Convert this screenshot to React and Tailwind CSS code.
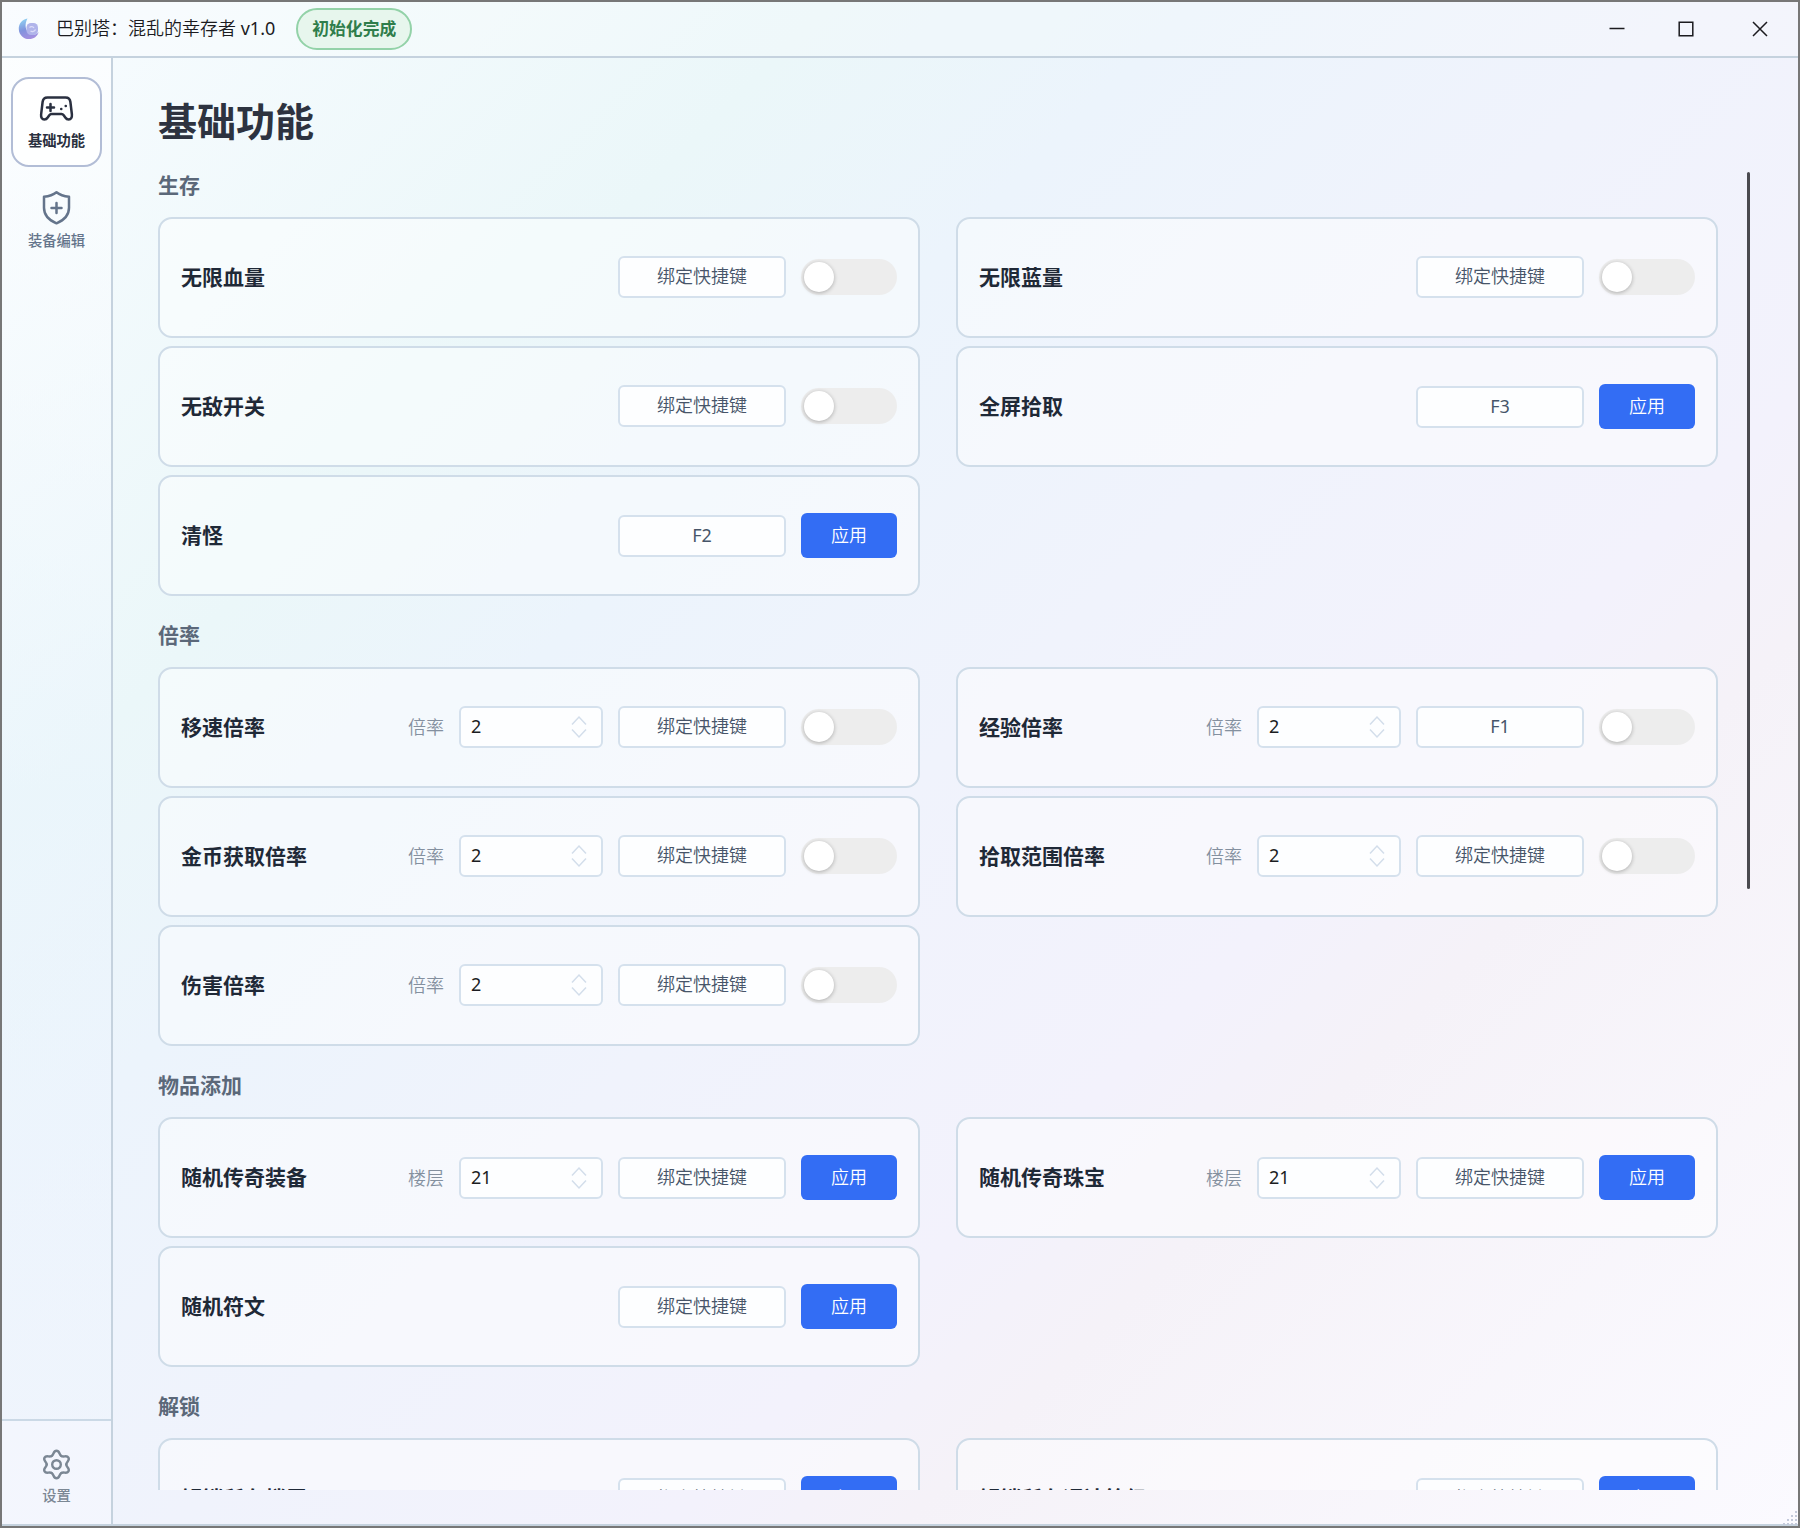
import React, { useState } from "react";

const sections = [
  {
    title: "生存",
    items: [
      { name: "无限血量", type: "switch" },
      { name: "无限蓝量", type: "switch" },
      { name: "无敌开关", type: "switch" },
      { name: "全屏拾取", hotkey: "F3", type: "apply" },
      { name: "清怪", hotkey: "F2", type: "apply" },
    ],
  },
  {
    title: "倍率",
    items: [
      { name: "移速倍率", label: "倍率", value: 2, type: "switch" },
      { name: "经验倍率", label: "倍率", value: 2, hotkey: "F1", type: "switch" },
      { name: "金币获取倍率", label: "倍率", value: 2, type: "switch" },
      { name: "拾取范围倍率", label: "倍率", value: 2, type: "switch" },
      { name: "伤害倍率", label: "倍率", value: 2, type: "switch" },
    ],
  },
  {
    title: "物品添加",
    items: [
      { name: "随机传奇装备", label: "楼层", value: 21, type: "apply" },
      { name: "随机传奇珠宝", label: "楼层", value: 21, type: "apply" },
      { name: "随机符文", type: "apply" },
    ],
  },
  {
    title: "解锁",
    items: [
      { name: "解锁所有楼层", type: "apply" },
      { name: "解锁所有通达等级", type: "apply" },
    ],
  },
];

const Logo = () => (
  <svg width="22" height="22" viewBox="0 0 22 22">
    <defs>
      <linearGradient id="moon" x1="0.3" y1="0" x2="0.6" y2="1">
        <stop offset="0" stopColor="#8fd0f2" />
        <stop offset="0.5" stopColor="#8194dd" />
        <stop offset="1" stopColor="#a78fe0" />
      </linearGradient>
    </defs>
    <path
      d="M9.500 0.600C4.300 1.400 0.600 5.800 0.800 11.200c0.200 5.600 4.800 10 10.400 9.900 4.600-0.100 8.300-3 9.500-7.200-2 2.600-5.600 3.400-8.600 1.900C7.300 13.400 6.200 6.200 9.500 0.600z"
      fill="url(#moon)"
    />
    <rect x="8.500" y="5" width="11.500" height="12" rx="4.500" fill="#b0b4ea" />
    <path d="M11.500 9.500a3 3 0 0 1 4.500 0.500M17.500 11.500a3.500 3.500 0 0 1-5 1.500" stroke="#dcdcf8" strokeWidth="1.300" fill="none" />
  </svg>
);

const GearIcon = () => (
  <svg width="37" height="37" viewBox="-18.500 -18.500 37 37" fill="none" stroke="currentColor" strokeWidth="2.400" strokeLinecap="round">
    {[0, 60, 120, 180, 240, 300].map((deg) => (
      <path
        key={deg}
        transform={`rotate(${deg})`}
        d="M-4.900-8.500C-2.300-10-3.400-13.800 0-13.800C3.400-13.800 2.300-10 4.900-8.500"
      />
    ))}
    <circle cx="0" cy="0" r="4.300" />
  </svg>
);

const Switch = () => {
  const [on, setOn] = useState(false);
  return (
    <button
      onClick={() => setOn(!on)}
      className={`flex h-9 w-24 items-center rounded-full px-[3px] ${on ? "justify-end bg-[#336df4]" : "bg-[#ededed]"}`}
    >
      <span className="h-[30px] w-[30px] rounded-full bg-white shadow-[0_1px_4px_rgba(0,0,0,0.28)]"></span>
    </button>
  );
};

const NumberBox = ({ value }) => (
  <div className="flex h-[42px] w-36 items-center justify-between rounded-md border-2 border-[#d5e1ed] bg-[#fdfeff] pr-[13px] pl-2.5">
    <span className="text-[18px] text-[#1b1d22]">{value}</span>
    <svg width="18" height="24" viewBox="0 0 18 24" fill="none" stroke="#d3deeb" strokeWidth="1.500">
      <path d="M2 9.500L9 2l7 7.500M2 14.500L9 22l7-7.500" />
    </svg>
  </div>
);

const Card = ({ item }) => (
  <div className="flex h-[121px] items-center rounded-[14px] border-2 border-[#cfdce8] bg-white/45 px-[21px]">
    <span className="flex-1 text-[21px] font-bold text-[#1f2937]">{item.name}</span>
    <div className={`flex items-center gap-[15px] ${item.type === "switch" ? "mb-0.5" : ""}`}>
      {item.label && (
        <>
          <span className="pt-0.5 text-[18px] font-[350] text-[#84909f]">{item.label}</span>
          <NumberBox value={item.value} />
        </>
      )}
      <div
        className={`flex h-[42px] w-[168px] items-center justify-center rounded-md border-2 border-[#d5e1ed] bg-[#fdfeff] text-[18px] text-[#475569] ${item.hotkey ? "font-normal" : "font-[350]"}`}
      >
        {item.hotkey || "绑定快捷键"}
      </div>
      {item.type === "switch" ? (
        <Switch />
      ) : (
        <button className="h-[45px] w-24 rounded-md bg-[#336df4] text-[18px] font-[350] text-white">应用</button>
      )}
    </div>
  </div>
);

const TitleBar = () => (
  <header className="flex h-14 shrink-0 items-center border-b-2 border-[#c5d2de] bg-white/20 pl-4">
    <Logo />
    <span className="ml-4 pb-0.5 text-[18px] font-[350] text-[#1b1b1f]">
      巴别塔：混乱的幸存者 <span className="font-normal">v1.0</span>
    </span>
    <span className="ml-[21px] flex h-[42px] w-[116px] items-center justify-center rounded-full border-2 border-[#93d2a8] bg-[#e7f6ed] text-[16.800px] font-bold text-[#2f7d4b]">
      初始化完成
    </span>
    <div className="ml-auto flex items-center pr-[30px] text-[#1b1b1f]">
      <svg width="16" height="16" viewBox="0 0 16 16" stroke="currentColor" strokeWidth="1.500">
        <path d="M0.500 7.500h15" />
      </svg>
      <svg className="ml-[53px]" width="16" height="16" viewBox="0 0 16 16" fill="none" stroke="currentColor" strokeWidth="1.500">
        <path d="M1.200 1.200h13.600v13.600H1.200z" />
      </svg>
      <svg className="ml-[58px]" width="16" height="16" viewBox="0 0 16 16" stroke="currentColor" strokeWidth="1.500">
        <path d="M1 1l14 14M15 1L1 15" />
      </svg>
    </div>
  </header>
);

const Sidebar = () => (
  <aside className="flex w-[111px] shrink-0 flex-col border-r-2 border-[#c5d2de] bg-linear-to-b from-white/60 via-[#eaf4fd]/50 to-[#f0f5fd]/60">
    <div className="flex flex-1 flex-col gap-[9px] px-[9px] pt-[19px]">
      <button className="flex h-[90px] flex-col items-center rounded-[18px] border-2 border-[#b2bdd6] bg-white/90 pt-[11px] text-[#2a3040]">
        <svg width="37" height="37" viewBox="-0.500 -0.500 37 37" fill="none" stroke="currentColor" strokeWidth="2.500" strokeLinecap="round" strokeLinejoin="round">
          <path d="M9 7h18c3 0 4.600 1.600 4.900 4.500l1.500 12.500c.3 3-1 5-3.200 5-1.500 0-2.500-.6-3.400-2l-1.600-2.300c-.6-.8-1.300-1.200-2.200-1.200h-10c-.9 0-1.600.4-2.200 1.200L9.200 27c-.9 1.400-1.900 2-3.400 2-2.200 0-3.500-2-3.200-5l1.500-12.500C4.400 8.600 6 7 9 7z" />
          <path d="M12 13.500v7M8.500 17h7" />
          <path d="M22.700 18.500h.1M27.200 15.500h.1" />
        </svg>
        <span className="mt-1 text-[14.300px] leading-5 font-bold">基础功能</span>
      </button>
      <button className="flex h-[90px] flex-col items-center pt-3.5 text-[#64748b]">
        <svg width="37" height="37" viewBox="-0.500 -0.500 37 37" fill="none" stroke="currentColor" strokeWidth="2.500" strokeLinecap="round" strokeLinejoin="round">
          <path d="M18 1.800c3.500 2.800 7.500 4 12.500 4.500v11c0 8-5 12.500-12.500 15.500C10.500 29.800 5.500 25.300 5.500 17.300V6.300c5-.5 9-1.700 12.500-4.500z" />
          <path d="M18 12.500v10M13 17.500h10" />
        </svg>
        <span className="mt-1 text-[14.300px] leading-5 font-medium">装备编辑</span>
      </button>
    </div>
    <div className="flex h-[105px] flex-col items-center border-t-2 border-[#cbd9e6] bg-[#f5f7fd]/70 pt-[25px] text-[#7b8794]">
      <GearIcon />
      <span className="mt-[3px] text-[14.300px] leading-5 font-medium">设置</span>
    </div>
  </aside>
);

const App = () => {
  return (
    <div className="relative flex h-[1528px] w-[1800px] flex-col overflow-hidden border-2 border-[#777777] bg-[linear-gradient(135deg,#f8fcff_0%,#ebf7f9_25%,#ecf4fc_36%,#f0f3fc_51%,#f3f2fc_66%,#f5f2f8_73%,#fbfaff_100%)] font-['Noto_Sans','Noto_Sans_CJK_SC',sans-serif]">
      <TitleBar />
      <div className="flex min-h-0 flex-1 border-b-2 border-[#c5d2de]">
        <Sidebar />
        <main className="flex min-w-0 flex-1 flex-col pr-12 pl-[45px]">
          <h1 className="mt-[35px] h-[79px] text-[39px] leading-[56px] font-bold text-[#2d3340]">基础功能</h1>
          <div className="flex h-[1318px] justify-between overflow-hidden">
            <div className="w-[1560px]">
              {sections.map((s) => (
                <section key={s.title} className="mb-[26px]">
                  <h2 className="h-[45px] text-[21px] leading-[26px] font-bold text-[#5b6879]">{s.title}</h2>
                  <div className="grid grid-cols-2 gap-x-9 gap-y-2">
                    {s.items.map((item) => (
                      <Card key={item.name} item={item} />
                    ))}
                  </div>
                </section>
              ))}
            </div>
            <div className="h-[717px] w-[3px] rounded-full bg-[#4a4a4f]"></div>
          </div>
        </main>
      </div>
      {/* Resize grip */}
      <svg className="absolute right-0 bottom-0" width="16" height="16" viewBox="0 0 16 16" fill="#c3c9da">
        <path d="M13 1h2v2h-2zM9 5h2v2H9zM13 5h2v2h-2zM5 9h2v2H5zM9 9h2v2H9zM13 9h2v2h-2zM1 13h2v2H1zM5 13h2v2H5zM9 13h2v2H9zM13 13h2v2h-2z" />
      </svg>
    </div>
  );
};

export default App;
